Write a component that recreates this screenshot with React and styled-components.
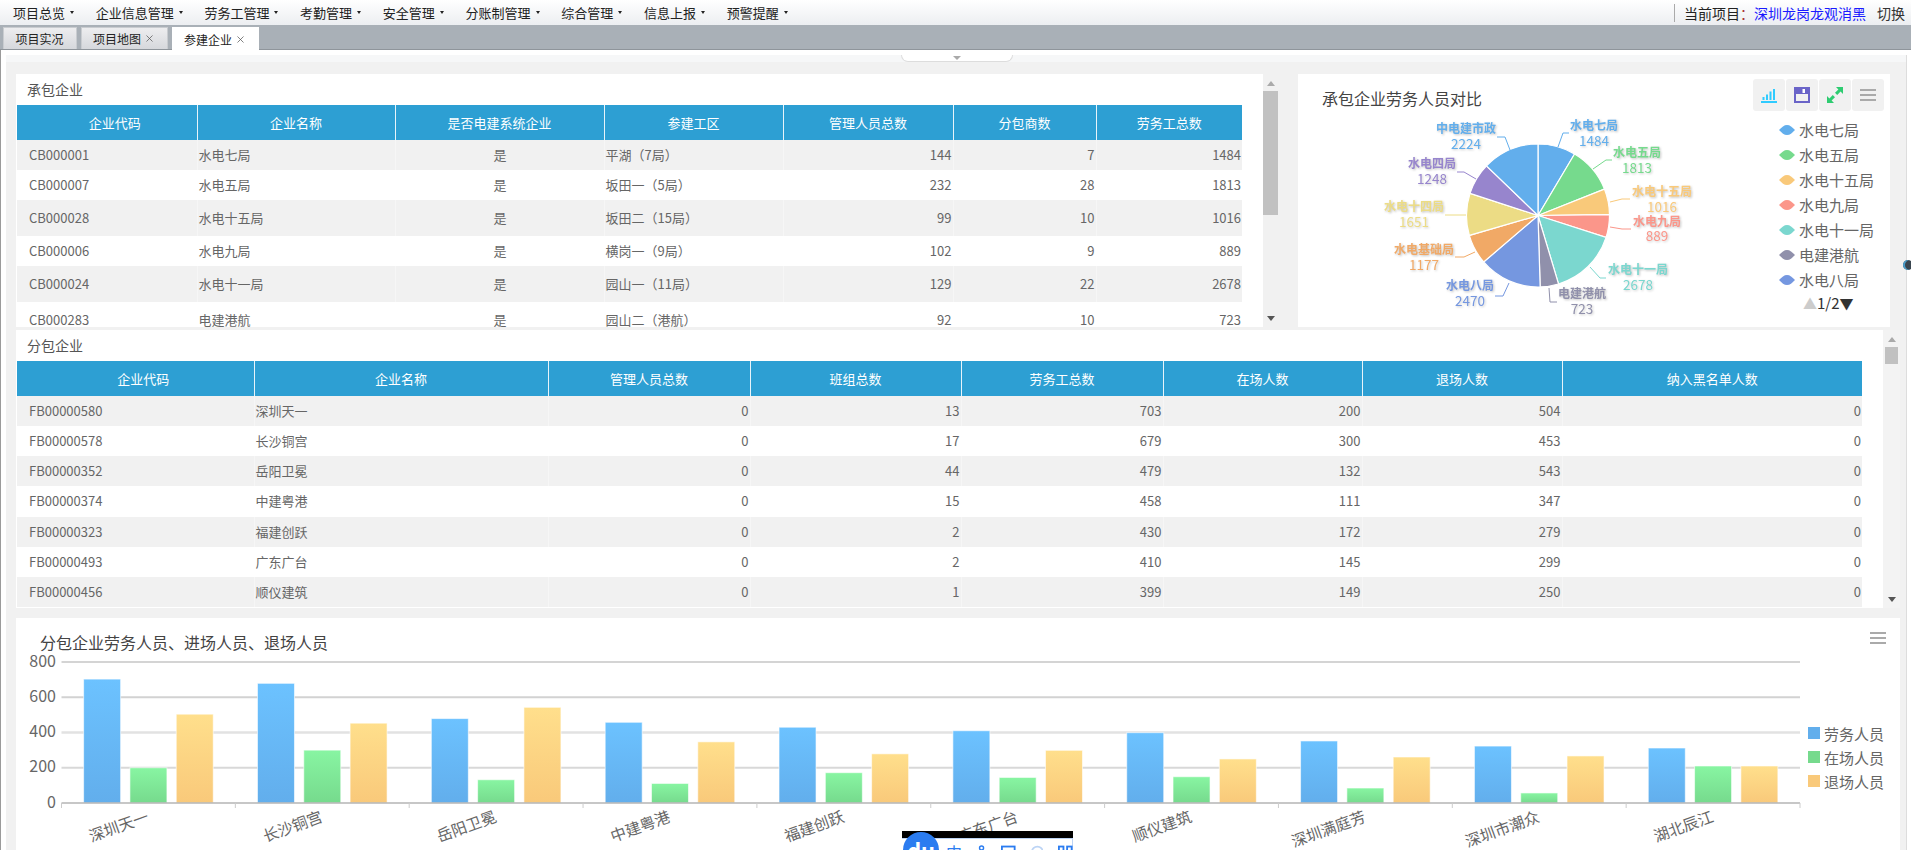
import styled, { createGlobalStyle } from "styled-components"
import { X } from "lucide-react"

const FONT = `"Noto Sans CJK SC", "Noto Sans", sans-serif`

const GlobalStyle = createGlobalStyle`
    html, body {
        margin: 0;
        padding: 0;
        height: 850px;
        overflow: hidden;
        background: #fff;
        font-family: ${FONT};
    }
    * {
        box-sizing: border-box;
    }
`

const NAV_ITEMS = ["项目总览", "企业信息管理", "劳务工管理", "考勤管理", "安全管理", "分账制管理", "综合管理", "信息上报", "预警提醒"]

const MAIN_COLS = [180, 198, 209, 179, 170, 143, 146]
const MAIN_HEAD = ["企业代码", "企业名称", "是否电建系统企业", "参建工区", "管理人员总数", "分包商数", "劳务工总数"]
const MAIN_ROWS = [
    { h: 30, c: ["CB000001", "水电七局", "是", "平湖（7局）", 144, 7, 1484] },
    { h: 30, c: ["CB000007", "水电五局", "是", "坂田一（5局）", 232, 28, 1813] },
    { h: 36, c: ["CB000028", "水电十五局", "是", "坂田二（15局）", 99, 10, 1016] },
    { h: 30, c: ["CB000006", "水电九局", "是", "横岗一（9局）", 102, 9, 889] },
    { h: 36, c: ["CB000024", "水电十一局", "是", "园山一（11局）", 129, 22, 2678] },
    { h: 36, c: ["CB000283", "电建港航", "是", "园山二（港航）", 92, 10, 723] },
]
const MAIN_ALIGN = ["left", "left", "center", "left", "right", "right", "right"]

const SUB_COLS = [237, 294, 202, 211, 202, 199, 200, 300]
const SUB_HEAD = ["企业代码", "企业名称", "管理人员总数", "班组总数", "劳务工总数", "在场人数", "退场人数", "纳入黑名单人数"]
const SUB_ROWS = [
    { h: 30, c: ["FB00000580", "深圳天一", 0, 13, 703, 200, 504, 0] },
    { h: 30, c: ["FB00000578", "长沙铜宫", 0, 17, 679, 300, 453, 0] },
    { h: 30, c: ["FB00000352", "岳阳卫冕", 0, 44, 479, 132, 543, 0] },
    { h: 31, c: ["FB00000374", "中建粤港", 0, 15, 458, 111, 347, 0] },
    { h: 30, c: ["FB00000323", "福建创跃", 0, 2, 430, 172, 279, 0] },
    { h: 30, c: ["FB00000493", "广东广台", 0, 2, 410, 145, 299, 0] },
    { h: 30, c: ["FB00000456", "顺仪建筑", 0, 1, 399, 149, 250, 0] },
]
const SUB_ALIGN = ["left", "left", "right", "right", "right", "right", "right", "right"]

const PIE = [
    { name: "水电七局", value: 1484, color: "#62aeec", nx: 1594, ny: 124.5, vy: 140, line: "1558,147 1563,133 1569,133" },
    { name: "水电五局", value: 1813, color: "#76da8d", nx: 1637, ny: 151.5, vy: 167, line: "1593,169 1606,160 1612,160" },
    { name: "水电十五局", value: 1016, color: "#f9c97a", nx: 1662, ny: 190.5, vy: 206, line: "1610,202 1622,199 1630,199" },
    { name: "水电九局", value: 889, color: "#fb968a", nx: 1657, ny: 220.5, vy: 235, line: "1610,227 1622,229 1631,229" },
    { name: "水电十一局", value: 2678, color: "#7bd7cf", nx: 1638, ny: 268.5, vy: 284, line: "1590,267 1600,278 1606,278" },
    { name: "电建港航", value: 723, color: "#9090ab", nx: 1582, ny: 292.5, vy: 308, line: "1549,288 1550,302 1557,302" },
    { name: "水电八局", value: 2470, color: "#7597e0", nx: 1470, ny: 284.5, vy: 300, line: "1509,283 1503,296 1495,296" },
    { name: "水电基础局", value: 1177, color: "#f1a966", nx: 1424, ny: 248.5, vy: 264, line: "1475,252 1464,257 1455,257" },
    { name: "水电十四局", value: 1651, color: "#ecdc85", nx: 1414, ny: 205.5, vy: 221, line: "1466,215 1455,215 1445,215" },
    { name: "水电四局", value: 1248, color: "#9785cd", nx: 1432, ny: 162.5, vy: 178, line: "1476,179 1464,172 1457,172" },
    { name: "中电建市政", value: 2224, color: "#62aeec", nx: 1466, ny: 127.5, vy: 143, line: "1510,150 1505,137 1497,137" },
]

const BARS = [
    { name: "深圳天一", v: [703, 200, 504] },
    { name: "长沙铜宫", v: [679, 300, 453] },
    { name: "岳阳卫冕", v: [479, 132, 543] },
    { name: "中建粤港", v: [458, 111, 347] },
    { name: "福建创跃", v: [430, 172, 279] },
    { name: "广东广台", v: [410, 145, 299] },
    { name: "顺仪建筑", v: [399, 149, 250] },
    { name: "深圳满庭芳", v: [352, 85, 261] },
    { name: "深圳市潮众", v: [323, 57, 267] },
    { name: "湖北辰江", v: [312, 210, 210] },
]

const AXIS_LEFT = 61.5
const AXIS_BOTTOM = 803
const CAT_WIDTH = 173.85
const PER_UNIT = 141 / 800
const BAR_W = 37
const BAR_GAP = 9.3

const GRID = [
    { v: 800, color: "#c6c6c6", w: 1.5 },
    { v: 600, color: "#d2d2d2", w: 2 },
    { v: 400, color: "#e2e2e2", w: 2.5 },
    { v: 200, color: "#d8d8d8", w: 2 },
]

const BAR_LEGEND = [
    { name: "劳务人员", color: "#62aeec" },
    { name: "在场人员", color: "#76da8d" },
    { name: "退场人员", color: "#f9c97a" },
]

const slicePath = (cx, cy, r, from, to) => {
    const x1 = cx + r * Math.sin(from)
    const y1 = cy - r * Math.cos(from)
    const x2 = cx + r * Math.sin(to)
    const y2 = cy - r * Math.cos(to)
    const large = to - from > Math.PI ? 1 : 0
    return `M${cx} ${cy} L${x1} ${y1} A${r} ${r} 0 ${large} 1 ${x2} ${y2} Z`
}

const PieChart = () => {
    const total = PIE.reduce((sum, p) => sum + p.value, 0)
    let angle = 0
    return (
        <PieSvg viewBox="1298 114 470 213">
            {PIE.map((p) => {
                const from = angle
                angle += (p.value / total) * Math.PI * 2
                return <path key={p.name} d={slicePath(1538, 215.5, 71.5, from, angle)} fill={p.color} stroke="#fff" strokeWidth="1.2" />
            })}
            {PIE.map((p) => (
                <g key={p.name} fill={p.color}>
                    <polyline points={p.line} fill="none" stroke={p.color} strokeWidth="1" />
                    <PieName x={p.nx} y={p.ny}>{p.name}</PieName>
                    <PieValue x={p.nx} y={p.vy}>{p.value}</PieValue>
                </g>
            ))}
        </PieSvg>
    )
}

const BarChart = () => (
    <BarSvg viewBox="16 648 1790 202">
        <defs>
            <linearGradient id="barBlue" x1="0" y1="0" x2="0" y2="1">
                <stop offset="0" stopColor="#6cc2ff" />
                <stop offset="1" stopColor="#62aeec" />
            </linearGradient>
            <linearGradient id="barGreen" x1="0" y1="0" x2="0" y2="1">
                <stop offset="0" stopColor="#88f5a2" />
                <stop offset="1" stopColor="#76da8d" />
            </linearGradient>
            <linearGradient id="barYellow" x1="0" y1="0" x2="0" y2="1">
                <stop offset="0" stopColor="#ffdf8c" />
                <stop offset="1" stopColor="#f9c97a" />
            </linearGradient>
        </defs>
        {GRID.map((g) => (
            <line key={g.v} x1={AXIS_LEFT} x2="1800" y1={AXIS_BOTTOM - g.v * PER_UNIT} y2={AXIS_BOTTOM - g.v * PER_UNIT} stroke={g.color} strokeWidth={g.w} />
        ))}
        {[800, 600, 400, 200, 0].map((v) => (
            <AxisValue key={v} x="56" y={AXIS_BOTTOM - v * PER_UNIT + 4.5}>{v}</AxisValue>
        ))}
        {BARS.map((cat, i) => {
            const center = AXIS_LEFT + CAT_WIDTH * (i + 0.5)
            const start = center - (BAR_W * 3 + BAR_GAP * 2) / 2
            return (
                <g key={cat.name}>
                    {cat.v.map((v, j) => (
                        <rect
                            key={j}
                            x={start + j * (BAR_W + BAR_GAP)}
                            y={AXIS_BOTTOM - v * PER_UNIT}
                            width={BAR_W}
                            height={v * PER_UNIT}
                            fill={["url(#barBlue)", "url(#barGreen)", "url(#barYellow)"][j]}
                            stroke="#fff"
                            strokeOpacity="0.6"
                            strokeWidth="1"
                        />
                    ))}
                    <AxisLabel transform={`translate(${center - 1} 814.5) rotate(-20)`}>{cat.name}</AxisLabel>
                </g>
            )
        })}
        <line x1={AXIS_LEFT} x2="1800" y1={AXIS_BOTTOM} y2={AXIS_BOTTOM} stroke="#b5b5b5" strokeWidth="1.5" />
        {Array.from({ length: 11 }, (_, i) => (
            <line key={i} x1={AXIS_LEFT + CAT_WIDTH * i} x2={AXIS_LEFT + CAT_WIDTH * i} y1={AXIS_BOTTOM} y2="808" stroke="#ccc" strokeWidth="1" />
        ))}
    </BarSvg>
)

const DataTable = ({ cols, head, rows, align }) => (
    <Table>
        <colgroup>
            {cols.map((w, i) => <col key={i} width={w} />)}
        </colgroup>
        <thead>
            <tr>
                {head.map((h) => <HeadCell key={h}>{h}</HeadCell>)}
            </tr>
        </thead>
        <tbody>
            {rows.map((row) => (
                <Row key={row.c[0]} $h={row.h}>
                    {row.c.map((c, i) => <Cell key={i} $align={align[i]} $first={i === 0}>{c}</Cell>)}
                </Row>
            ))}
        </tbody>
    </Table>
)

const MenuIcon = () => (
    <svg width="16" height="12" viewBox="0 0 16 12">
        <rect y="0" width="16" height="2" fill="#aaa" />
        <rect y="5" width="16" height="2" fill="#aaa" />
        <rect y="10" width="16" height="2" fill="#aaa" />
    </svg>
)

const App = () => {
    return (
        <Page>
            <GlobalStyle />
            <TopNav>
                <NavList>
                    {NAV_ITEMS.map((item) => (
                        <NavItem key={item}>{item}<Caret /></NavItem>
                    ))}
                </NavList>
                <Project>
                    当前项目<Colon>：</Colon><ProjectName>深圳龙岗龙观消黑</ProjectName><Switch>切换</Switch>
                </Project>
            </TopNav>
            <TabBar>
                <Tab>项目实况</Tab>
                <Tab>项目地图<X size={11} strokeWidth={1.6} /></Tab>
                <Tab $active>参建企业<X size={11} strokeWidth={1.6} /></Tab>
            </TabBar>
            <Main>
                <Content>
                    <Strip><Handle /></Strip>
                    <TopRow>
                        <TablePanel>
                            <TableArea>
                                <PanelTitle>承包企业</PanelTitle>
                                <DataTable cols={MAIN_COLS} head={MAIN_HEAD} rows={MAIN_ROWS} align={MAIN_ALIGN} />
                            </TableArea>
                            <ScrollBar $width={15}>
                                <ArrowUp />
                                <Thumb $height={124} $inset={0} />
                                <ArrowDown />
                            </ScrollBar>
                        </TablePanel>
                        <PiePanel>
                            <PieMain>
                                <ChartTitle>承包企业劳务人员对比</ChartTitle>
                                <PieChart />
                            </PieMain>
                            <PieSide>
                                <Toolbar>
                                    <ToolButton>
                                        <svg width="16" height="16" viewBox="0 0 16 16" fill="#2fcbff">
                                            <rect x="0" y="14" width="16" height="2" />
                                            <rect x="1.5" y="10" width="2" height="3" />
                                            <rect x="5" y="7.5" width="2" height="5.5" />
                                            <rect x="8.5" y="4.5" width="2" height="8.5" />
                                            <rect x="12" y="2" width="2" height="11" />
                                        </svg>
                                    </ToolButton>
                                    <ToolButton>
                                        <svg width="16" height="16" viewBox="0 0 16 16">
                                            <rect x="1" y="1" width="14" height="14" fill="none" stroke="#6a64c8" strokeWidth="2" />
                                            <rect x="1" y="1" width="13" height="6" fill="#6a64c8" />
                                            <rect x="8.5" y="2" width="2.5" height="4" fill="#fff" />
                                        </svg>
                                    </ToolButton>
                                    <ToolButton>
                                        <svg width="16" height="16" viewBox="0 0 16 16" fill="#2ecc71">
                                            <path d="M16 0 V7 L13.6 4.6 L10.2 8 L8 5.8 L11.4 2.4 L9 0 Z" />
                                            <path d="M0 16 V9 L2.4 11.4 L5.8 8 L8 10.2 L4.6 13.6 L7 16 Z" />
                                        </svg>
                                    </ToolButton>
                                    <ToolButton><MenuIcon /></ToolButton>
                                </Toolbar>
                                <PieLegend>
                                    {PIE.slice(0, 7).map((p) => (
                                        <PieLegendItem key={p.name}>
                                            <svg width="16" height="10" viewBox="0 0 16 10">
                                                <path d="M0 5 C3 2 5 0 8 0 C11 0 13 2 16 5 C13 8 11 10 8 10 C5 10 3 8 0 5Z" fill={p.color} />
                                            </svg>
                                            {p.name}
                                        </PieLegendItem>
                                    ))}
                                    <Pager><PagerMark>▲</PagerMark>1/2<PagerMark $on>▼</PagerMark></Pager>
                                </PieLegend>
                            </PieSide>
                        </PiePanel>
                    </TopRow>
                    <SubPanel>
                        <SubArea>
                            <PanelTitle>分包企业</PanelTitle>
                            <DataTable cols={SUB_COLS} head={SUB_HEAD} rows={SUB_ROWS} align={SUB_ALIGN} />
                        </SubArea>
                        <ScrollBar $width={17} $track="#f3f3f3">
                            <ArrowUp />
                            <Thumb $height={17} $inset={2} />
                            <ArrowDown />
                        </ScrollBar>
                    </SubPanel>
                    <BarPanel>
                        <BarHead>
                            <BarTitle>分包企业劳务人员、进场人员、退场人员</BarTitle>
                            <MenuIcon />
                        </BarHead>
                        <BarBody>
                            <BarChart />
                            <BarLegend>
                                {BAR_LEGEND.map((l) => (
                                    <BarLegendItem key={l.name}>
                                        <Swatch $color={l.color} />
                                        {l.name}
                                    </BarLegendItem>
                                ))}
                            </BarLegend>
                        </BarBody>
                    </BarPanel>
                </Content>
                <EdgeDot />
            </Main>
            <ImeBar>
                <ImeLogo>du</ImeLogo>
                <ImeTools>
                    <ImeText>中</ImeText>
                    <svg width="10" height="14" viewBox="0 0 10 14">
                        <circle cx="5" cy="2.5" r="2.2" fill="none" stroke="#2b7cf0" strokeWidth="1.6" />
                        <rect x="1" y="6" width="8" height="8" fill="#2b7cf0" />
                    </svg>
                    <svg width="16" height="14" viewBox="0 0 16 14">
                        <rect x="1" y="1" width="14" height="12" fill="none" stroke="#2b7cf0" strokeWidth="2" />
                    </svg>
                    <svg width="14" height="14" viewBox="0 0 14 14">
                        <circle cx="7" cy="7" r="6" fill="none" stroke="#bcd4f5" strokeWidth="2" />
                    </svg>
                    <svg width="16" height="14" viewBox="0 0 16 14" fill="none" stroke="#2b7cf0" strokeWidth="2">
                        <rect x="1" y="1" width="5" height="5" />
                        <rect x="10" y="1" width="5" height="5" />
                        <rect x="1" y="9" width="5" height="5" />
                        <rect x="10" y="9" width="5" height="5" />
                    </svg>
                </ImeTools>
            </ImeBar>
        </Page>
    )
}

const Page = styled.div`
    position: relative;
    width: 1911px;
    height: 850px;
    overflow: hidden;
`

const TopNav = styled.div`
    display: flex;
    align-items: center;
    height: 25px;
    padding-left: 13px;
    background: linear-gradient(#ffffff, #eceef1);
`

const NavList = styled.div`
    display: flex;
    gap: 21.7px;
`

const NavItem = styled.div`
    display: flex;
    align-items: center;
    font-size: 13px;
    color: #222;
    white-space: nowrap;
`

const Caret = styled.span`
    width: 0;
    height: 0;
    margin-left: 5px;
    border-left: 2.5px solid transparent;
    border-right: 2.5px solid transparent;
    border-top: 3px solid #222;
`

const Project = styled.div`
    display: flex;
    align-items: center;
    height: 18px;
    margin-left: auto;
    margin-right: 6px;
    padding-left: 9px;
    border-left: 1px solid #aaa;
    font-size: 14px;
    color: #222;
    white-space: nowrap;
`

const Colon = styled.span`
    color: #a33;
`

const ProjectName = styled.span`
    color: #1a1aff;
`

const Switch = styled.span`
    margin-left: 11px;
    color: #333;
`

const TabBar = styled.div`
    display: flex;
    align-items: flex-end;
    gap: 4px;
    height: 25px;
    padding-left: 3px;
    background: #a9b0b7;
    border-bottom: 1px solid #8f959b;
`

const Tab = styled.div`
    display: flex;
    align-items: center;
    justify-content: center;
    gap: 3px;
    min-width: 74px;
    height: ${(p) => (p.$active ? "23px" : "22px")};
    margin-bottom: ${(p) => (p.$active ? "-1px" : "0")};
    padding: 0 12px 0 11px;
    font-size: 12px;
    color: #222;
    background: ${(p) => (p.$active ? "#fff" : "linear-gradient(#ededef, #d6d8dc)")};
    border: 1px solid ${(p) => (p.$active ? "#fff" : "#c9ccd0")};
    border-bottom: none;

    svg {
        color: #555;
    }
`

const Main = styled.div`
    position: relative;
    height: 800px;
    padding: 5px 4px 0 5px;
    background: #fff;
    border-left: 1px solid #9a9a9a;
`

const Content = styled.div`
    height: 795px;
    padding-left: 10px;
    background: #f1f1f1;
    border-right: 1px solid #ddd;
`

const Strip = styled.div`
    display: flex;
    justify-content: center;
    height: 7px;
    margin-left: -10px;
    background: #f6f7f8;
`

const Handle = styled.div`
    position: relative;
    width: 112px;
    height: 7px;
    margin-left: 1px;
    background: #fff;
    border: 1px solid #ddd;
    border-top: none;
    border-radius: 0 0 8px 8px;

    &::after {
        content: "";
        position: absolute;
        left: 50%;
        top: 1px;
        margin-left: -4px;
        border-left: 4px solid transparent;
        border-right: 4px solid transparent;
        border-top: 4px solid #aaa;
    }
`

const TopRow = styled.div`
    display: flex;
    gap: 20px;
    height: 253px;
    margin-top: 12px;
`

const TablePanel = styled.div`
    display: flex;
    width: 1262px;
    height: 100%;
`

const TableArea = styled.div`
    flex: 1;
    overflow: hidden;
    background: #fff;
`

const SubPanel = styled.div`
    display: flex;
    width: 1884px;
    height: 278px;
    margin-top: 3px;
`

const SubArea = styled(TableArea)``

const PanelTitle = styled.div`
    height: 31px;
    padding: 4.5px 0 0 11px;
    font-size: 14px;
    line-height: 20px;
    color: #555;
`

const Table = styled.table`
    table-layout: fixed;
    border-collapse: collapse;
    border-spacing: 0;
    margin-left: 1px;
`

const HeadCell = styled.th`
    height: 35px;
    padding: 0 0 0 16px;
    font-size: 13px;
    font-weight: 400;
    color: #fff;
    background: #2d9fd3;

    & + & {
        padding: 0;
        border-left: 1px solid #e8f4fa;
    }
`

const Row = styled.tr`
    height: ${(p) => p.$h}px;

    &:nth-child(odd) {
        background: #f1f1f1;
    }
`

const Cell = styled.td`
    padding: 0 ${(p) => (p.$align === "right" ? "1px" : "0")} 2px ${(p) => (p.$first ? "12px" : "1px")};
    font-size: 13px;
    color: #666;
    text-align: ${(p) => p.$align};
    white-space: nowrap;

    & + & {
        border-left: 1px solid rgba(255, 255, 255, 0.35);
    }
`

const ScrollBar = styled.div`
    position: relative;
    flex: none;
    display: flex;
    flex-direction: column;
    align-items: center;
    width: ${(p) => p.$width}px;
    padding-top: 7px;
    background: ${(p) => p.$track || "transparent"};
`

const ArrowUp = styled.span`
    width: 0;
    height: 0;
    border-left: 4px solid transparent;
    border-right: 4px solid transparent;
    border-bottom: 5px solid #aaa;
`

const ArrowDown = styled.span`
    width: 0;
    height: 0;
    margin-top: auto;
    margin-bottom: 6px;
    border-left: 4px solid transparent;
    border-right: 4px solid transparent;
    border-top: 5px solid #555;
`

const Thumb = styled.div`
    align-self: stretch;
    height: ${(p) => p.$height}px;
    margin: 5px ${(p) => p.$inset}px 0;
    background: #c1c1c1;
`

const PiePanel = styled.div`
    display: flex;
    width: 592px;
    height: 100%;
    background: #fff;
`

const PieMain = styled.div`
    width: 455px;
`

const ChartTitle = styled.div`
    height: 40px;
    padding: 13px 0 0 24px;
    font-size: 16px;
    line-height: 22px;
    color: #444;
    white-space: nowrap;
`

const PieSvg = styled.svg`
    display: block;
    width: 470px;
    height: 213px;
`

const PieName = styled.text`
    font-size: 12px;
    font-weight: 700;
    text-anchor: middle;
    dominant-baseline: central;
    filter: drop-shadow(1px 1px 1px rgba(0, 0, 0, 0.25));
`

const PieValue = styled.text`
    font-size: 13.5px;
    text-anchor: middle;
    dominant-baseline: central;
    filter: drop-shadow(1px 1px 1px rgba(0, 0, 0, 0.2));
`

const PieSide = styled.div`
    flex: 1;
`

const Toolbar = styled.div`
    display: flex;
    gap: 1px;
    margin-top: 5px;
`

const ToolButton = styled.div`
    display: flex;
    align-items: center;
    justify-content: center;
    width: 32px;
    height: 32px;
    background: #f1f1f1;
    border-radius: 3px;
`

const PieLegend = styled.div`
    display: flex;
    flex-direction: column;
    margin-top: 6px;
    padding-left: 26px;
`

const PieLegendItem = styled.div`
    display: flex;
    align-items: center;
    gap: 4px;
    height: 25px;
    font-size: 15px;
    color: #666;
    white-space: nowrap;
`

const Pager = styled.div`
    display: flex;
    align-items: center;
    height: 21px;
    margin-left: 24px;
    font-size: 15px;
    color: #333;
`

const PagerMark = styled.span`
    font-size: 14px;
    color: ${(p) => (p.$on ? "#333" : "#ccc")};
`

const BarPanel = styled.div`
    width: 1884px;
    height: 232px;
    margin-top: 10px;
    background: #fff;
`

const BarHead = styled.div`
    display: flex;
    justify-content: space-between;
    height: 30px;
    padding: 14px 14px 0 24px;
`

const BarTitle = styled.div`
    margin-top: -2.5px;
    font-size: 16px;
    line-height: 24px;
    color: #444;
    white-space: nowrap;
`

const BarBody = styled.div`
    display: flex;
`

const BarSvg = styled.svg`
    display: block;
    flex: none;
    width: 1790px;
    height: 202px;
`

const AxisValue = styled.text`
    font-size: 16px;
    fill: #666;
    text-anchor: end;
`

const AxisLabel = styled.text`
    font-size: 15.5px;
    fill: #666;
    text-anchor: end;
    dominant-baseline: central;
`

const BarLegend = styled.div`
    display: flex;
    flex-direction: column;
    padding: 73px 0 0 2px;
`

const BarLegendItem = styled.div`
    display: flex;
    align-items: center;
    gap: 4px;
    height: 24px;
    font-size: 15px;
    color: #666;
    white-space: nowrap;
`

const Swatch = styled.span`
    width: 12px;
    height: 12px;
    background: ${(p) => p.$color};
`

const EdgeDot = styled.div`
    position: absolute;
    right: -2px;
    top: 210px;
    width: 10px;
    height: 10px;
    border-radius: 50%;
    background: #3a4650;
    box-shadow: inset 2px 0 0 #4a9ecb;
`

const ImeBar = styled.div`
    position: absolute;
    left: 902px;
    top: 831px;
    width: 171px;
    height: 30px;
    border-top: 7px solid #000;
    background: #fff;
    box-shadow: inset -1px 1px 0 #bcd4f5;
`

const ImeLogo = styled.div`
    position: absolute;
    left: 1px;
    top: -6px;
    width: 36px;
    height: 36px;
    padding-top: 4px;
    border-radius: 50%;
    background: #2b7cf0;
    color: #fff;
    font-size: 22px;
    font-weight: 700;
    line-height: 28px;
    text-align: center;
`

const ImeTools = styled.div`
    display: flex;
    align-items: flex-start;
    gap: 15px;
    padding: 7px 0 0 44px;
`

const ImeText = styled.span`
    margin-top: -3px;
    font-size: 16px;
    line-height: 20px;
    color: #2b7cf0;
`

export default App
